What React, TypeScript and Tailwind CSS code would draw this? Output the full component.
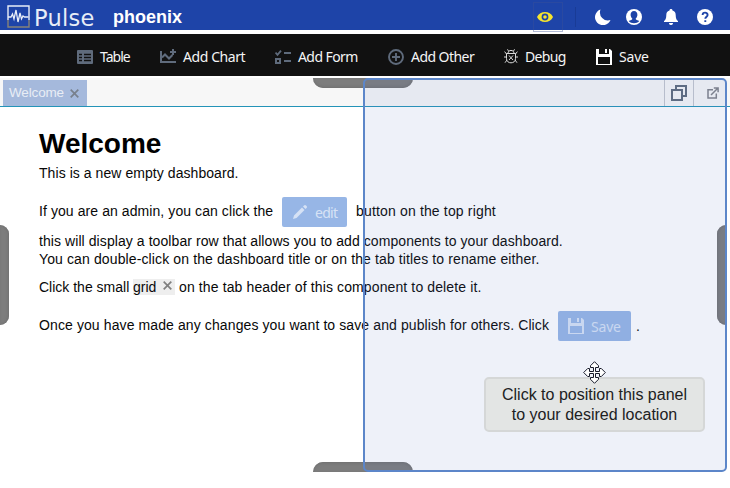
import React from "react";

const NOTO = "font-['Noto_Sans','Open_Sans',sans-serif]";

function TableIcon() {
  return (
    <svg width="16" height="14" viewBox="0 0 16 14" fill="none">
      <path d="M1 0h14q1 0 1 1v12q0 1-1 1H1q-1 0-1-1V1q0-1 1-1z" fill="#5f6b7c" />
      <path d="M2 4.500h3M7 4.500h7M2 7.500h3M7 7.500h7M2 10.500h3M7 10.500h7" stroke="#111111" strokeWidth="1.700" />
    </svg>
  );
}

function ChartIcon() {
  return (
    <svg width="16" height="15" viewBox="0 0 16 15" fill="none" stroke="#5f6b7c" strokeWidth="2">
      <path d="M1 2v11h15" />
      <path d="M2 8.500l3-3 4 4 3.500-3.500" />
      <path d="M13 0v6M10 3h6" />
    </svg>
  );
}

function FormIcon() {
  return (
    <svg width="16" height="14" viewBox="0 0 16 14" fill="none" stroke="#5f6b7c" strokeWidth="2">
      <path d="M.5 2.500l2 2.300L6 .6" strokeWidth="1.800" />
      <path d="M1 9h4v4H1z" />
      <path d="M9 3h7M9 11h7" />
    </svg>
  );
}

function AddIcon() {
  return (
    <svg width="16" height="16" viewBox="0 0 16 16" fill="none" stroke="#5f6b7c" strokeWidth="1.900">
      <circle cx="8" cy="8" r="7" />
      <path d="M8 4v8M4 8h8" />
    </svg>
  );
}

function BugIcon() {
  return (
    <svg width="14" height="15" viewBox="0 0 14 15" fill="none" stroke="#d9d9d9" strokeWidth="1">
      <path d="M4 4.200C4 .5 10 .5 10 4.200M2.500 4.500h9v5.200c0 5.500-9 5.500-9 0zM5 6.500l4 4.500M9 6.500L5 11" />
      <path d="M4.500 2L3.500.3M9.500 2l1-1.700M2.500 5L.6 2.600M11.500 5l1.900-2.400M2.500 8H0M11.500 8H14M3 11l-2 2.700M11 11l2 2.700" />
    </svg>
  );
}

function DiskIcon({ color }: { color: string }) {
  return (
    <svg width="16" height="16" viewBox="0 0 16 16" fill={color}>
      <path fillRule="evenodd" d="M0 0h3v5h10V0h1l2 2v14H0zM2 8v7h12V8z" />
      <path d="M9 0h2v4H9z" />
    </svg>
  );
}

function Tool({ icon, label, className, text }: { icon: React.ReactNode; label: string; className: string; text: string }) {
  return (
    <div className={`flex items-center shrink-0 ${className}`}>
      <span className="flex w-4 shrink-0 justify-center">{icon}</span>
      <span className={`ml-[7px] whitespace-nowrap text-[14px] leading-5 text-[#f5f5f5] ${NOTO} ${text}`}>{label}</span>
    </div>
  );
}

function Header() {
  return (
    <header className="relative flex h-[30px] items-center bg-[#1e44a8]">
      <svg className="ml-[7px] mt-[3px] shrink-0" width="23" height="23" viewBox="0 0 23 23" fill="none">
        <path d="M1 15V1h21v14" stroke="#e8edf7" strokeWidth="1.400" />
        <path d="M1 15v7h21v-7" stroke="#85827a" strokeWidth="1.400" />
        <path d="M1 12h3l1.500-3L7 14l2-9 2 12 2-9 1.500 6 1.500-3 1.500 1h4" stroke="#e8edf7" strokeWidth="1.300" />
      </svg>
      <span className="ml-[4px] mt-[6px] w-[62px] whitespace-nowrap font-['DejaVu_Sans',sans-serif] text-[22.500px] leading-6 tracking-[0.300px] text-[#e8edf7]">Pulse</span>
      <span className="ml-[17px] mt-[3px] whitespace-nowrap text-[18px] font-bold leading-5 text-white">phoenix</span>
      <span className="absolute left-[533px] top-[2px] flex h-[30px] w-[30px] items-center justify-center border border-[#3d5295]/40">
        <svg className="mr-[6px]" width="16" height="10" viewBox="0 0 16 10">
          <path d="M0 5C3-1.600 13-1.600 16 5 13 11.600 3 11.600 0 5z" fill="#f5e42e" />
          <circle cx="8" cy="5" r="2.600" fill="none" stroke="#1e44a8" strokeWidth="1.600" />
        </svg>
      </span>
      <div className="ml-auto mr-[17px] mt-[4px] flex items-center">
        <span className="mr-[19px] h-5 w-px bg-[#193b96]" />
        <svg width="16" height="16" viewBox="0 0 16 16" fill="#fff">
          <path d="M5.500.6A8 8 0 1 0 15.500 11 8 8 0 0 1 5.500.6z" />
        </svg>
        <svg className="ml-[15px]" width="16" height="16" viewBox="0 0 16 16">
          <circle cx="8" cy="8" r="8" fill="#fff" />
          <path d="M8 2c-2.300 0-3.600 1.700-3.400 4 .1 1.500.8 2.800 1.700 3.600.1 1-.6 1.300-3.600 2.500C5 15 11 15 13.300 12.100c-3-1.200-3.700-1.500-3.600-2.500.9-.8 1.600-2.100 1.700-3.600C11.600 3.700 10.300 2 8 2z" fill="#1e44a8" />
        </svg>
        <svg className="ml-[21px]" width="16" height="16" viewBox="0 0 16 16" fill="#fff">
          <path d="M8 0c.9 0 1.500.6 1.500 1.400C12 2 12.700 4 12.700 6c0 3.500.9 5 2.300 6v1H1v-1c1.400-1 2.300-2.500 2.300-6 0-2 .7-4 3.200-4.600C6.500.6 7.100 0 8 0zM6 14h4c0 2.700-4 2.700-4 0z" />
        </svg>
        <svg className="ml-[18px]" width="16" height="16" viewBox="0 0 16 16">
          <circle cx="8" cy="8" r="8" fill="#fff" />
          <path d="M5.600 6c0-3.200 5-3.200 5 0 0 1.700-2.300 1.700-2.300 3.800M8.300 11.200v1.900" fill="none" stroke="#1e44a8" strokeWidth="1.900" />
        </svg>
      </div>
    </header>
  );
}

function Toolbar() {
  return (
    <nav className="mt-1 flex h-[42px] items-center bg-[#111111] pt-[3px]">
      <Tool className="ml-[77px] w-[83px]" text="tracking-[-1px]" icon={<TableIcon />} label="Table" />
      <Tool className="w-[115px]" text="tracking-[-0.420px]" icon={<ChartIcon />} label="Add Chart" />
      <Tool className="w-[113px]" text="tracking-[-0.580px]" icon={<FormIcon />} label="Add Form" />
      <Tool className="w-[115px]" text="tracking-[-0.550px]" icon={<AddIcon />} label="Add Other" />
      <Tool className="w-[93px]" text="-translate-x-px tracking-[-0.650px]" icon={<BugIcon />} label="Debug" />
      <Tool className="" text="tracking-[-0.200px]" icon={<DiskIcon color="#fff" />} label="Save" />
    </nav>
  );
}

function TabBar() {
  return (
    <div className="mt-[2px] flex h-[29px] border-b border-[#2494b8] bg-[#f7f7f7] pl-[3px] pt-[2px]">
      <div className="flex h-[26px] w-[84px] items-center bg-[#a5b9dc] pl-[6px]">
        <span className="w-[55px] whitespace-nowrap text-[13.500px] leading-5 tracking-[-0.150px] text-[#e8edf5]">Welcome</span>
        <svg className="ml-[6px]" width="9" height="9" viewBox="0 0 9 9" fill="none" stroke="#78808c" strokeWidth="1.700">
          <path d="M.7.7l7.600 7.600M8.300.7L.7 8.300" />
        </svg>
      </div>
      <div className="ml-auto mr-[6px] flex h-[26px]">
        <div className="flex w-[30px] items-center justify-center border-x border-[#c2c6cd]">
          <svg width="16" height="16" viewBox="0 0 16 16" fill="none" stroke="#5f6b7c" strokeWidth="2">
            <path d="M1 5h10v10H1zM5 4V1h10v10h-3" />
          </svg>
        </div>
        <div className="flex w-[30px] items-center justify-center">
          <svg className="ml-[8px]" width="12" height="12" viewBox="0 0 12 12" fill="none" stroke="#808389" strokeWidth="1.500">
            <path d="M6 2.700H1v8.300h8.300V6.500M4 8L10.500 1.500M6.800.9h4.300v4.300" />
          </svg>
        </div>
      </div>
    </div>
  );
}

function Welcome() {
  return (
    <main className="whitespace-nowrap pl-[39px] text-[14px] leading-[18px] text-[#080808]">
      <h1 className="mt-[21px] h-[32px] text-[28px] font-bold leading-[32px] text-black">Welcome</h1>
      <p className="mt-[4px] h-[18px] tracking-[0.060px]">This is a new empty dashboard.</p>
      <p className="mt-[14px] flex h-[30px] items-center">
        <span className="w-[243px] tracking-[0.080px]">If you are an admin, you can click the</span>
        <span className="mt-px flex h-[30px] w-[65px] items-center rounded-[2px] bg-[#97b6e6] pl-[11px]">
          <svg width="14" height="14" viewBox="0 0 14 14" fill="#d6e2f5">
            <path d="M0 14l1-3.500 8-8L11.500 5l-8 8zM10 1.500L11 .5q1-1 2 0l.5.5q1 1 0 2l-1 1z" />
          </svg>
          <span className={`ml-[8px] mt-[2px] text-[14px] tracking-[-0.700px] text-[#d6e2f5] ${NOTO}`}>edit</span>
        </span>
        <span className="ml-[9px] tracking-[0.160px]">button on the top right</span>
      </p>
      <p className="mt-[6px] h-[18px] tracking-[0.075px]">this will display a toolbar row that allows you to add components to your dashboard.</p>
      <p className="h-[18px] tracking-[0.120px]">You can double-click on the dashboard title or on the tab titles to rename either.</p>
      <p className="mt-[10px] flex h-[18px] items-center">
        <span className="w-[94px]">Click the small</span>
        <span className="flex h-[16px] w-[42px] items-center bg-[#eeeeee]">
          grid
          <svg className="mb-[3px] ml-[7px]" width="9" height="9" viewBox="0 0 9 9" fill="none" stroke="#808080" strokeWidth="1.700">
            <path d="M.7.7l7.600 7.600M8.300.7L.7 8.300" />
          </svg>
        </span>
        <span className="ml-[4px] tracking-[0.120px]">on the tab header of this component to delete it.</span>
      </p>
      <p className="mt-[15px] flex h-[30px] items-center">
        <span className="w-[519px] pb-[2px] tracking-[0.105px]">Once you have made any changes you want to save and publish for others. Click</span>
        <span className="flex h-[30px] w-[73px] items-center rounded-[2px] bg-[#97b6e6] pl-[10px]">
          <DiskIcon color="#d6e2f5" />
          <span className={`ml-[7px] mt-[2px] text-[14px] tracking-[-0.200px] text-[#d6e2f5] ${NOTO}`}>Save</span>
        </span>
        <span className="ml-[5px]">.</span>
      </p>
    </main>
  );
}

function DropOverlay() {
  return (
    <>
      <div className="absolute left-[313px] top-[78px] h-[10px] w-[100px] rounded-b-[10px] bg-[#7d7d7d] shadow-[inset_0_-1px_3px_#707070]" />
      <div className="absolute left-[313px] top-[462px] h-[10px] w-[100px] rounded-t-[10px] bg-[#7d7d7d] shadow-[inset_0_1px_3px_#707070]" />
      <div className="absolute left-0 top-[225px] h-[100px] w-[9px] rounded-r-[9px] bg-[#7d7d7d] shadow-[inset_-1px_0_3px_#707070]" />
      <div className="absolute left-[717px] top-[225px] h-[100px] w-[10px] rounded-l-[9px] bg-[#7d7d7d] shadow-[inset_1px_0_3px_#707070]" />
      <div className="absolute left-[363px] top-[78px] h-[394px] w-[364px] rounded-[5px] border-2 border-[#5c86c9] bg-[#5878c8]/10" />
      <div className="absolute left-[484px] top-[377px] flex h-[55px] w-[221px] items-center justify-center rounded-[5px] border-2 border-[#d5d7d7] bg-[#e3e5e4] text-center text-[16px] leading-5 text-[#202122]">
        <span>Click to position this panel<br />to your desired location</span>
      </div>
      <svg className="absolute left-[583px] top-[361px]" width="23" height="23" viewBox="0 0 23 23" fill="#fff" stroke="#171a2a" strokeWidth="1">
        <path d="M11.500.7l4 4v1.800h-3v4h4v-3h1.800l4 4-4 4h-1.800v-3h-4v4h3v1.800l-4 4-4-4v-1.800h3v-4h-4v3H4.700l-4-4 4-4h1.800v3h4v-4h-3V4.700z" />
      </svg>
    </>
  );
}

export default function App() {
  return (
    <div className="relative h-[488px] w-[730px] overflow-hidden bg-white font-['Liberation_Sans',Arial,sans-serif]">
      <Header />
      <Toolbar />
      <TabBar />
      <Welcome />
      <DropOverlay />
    </div>
  );
}
